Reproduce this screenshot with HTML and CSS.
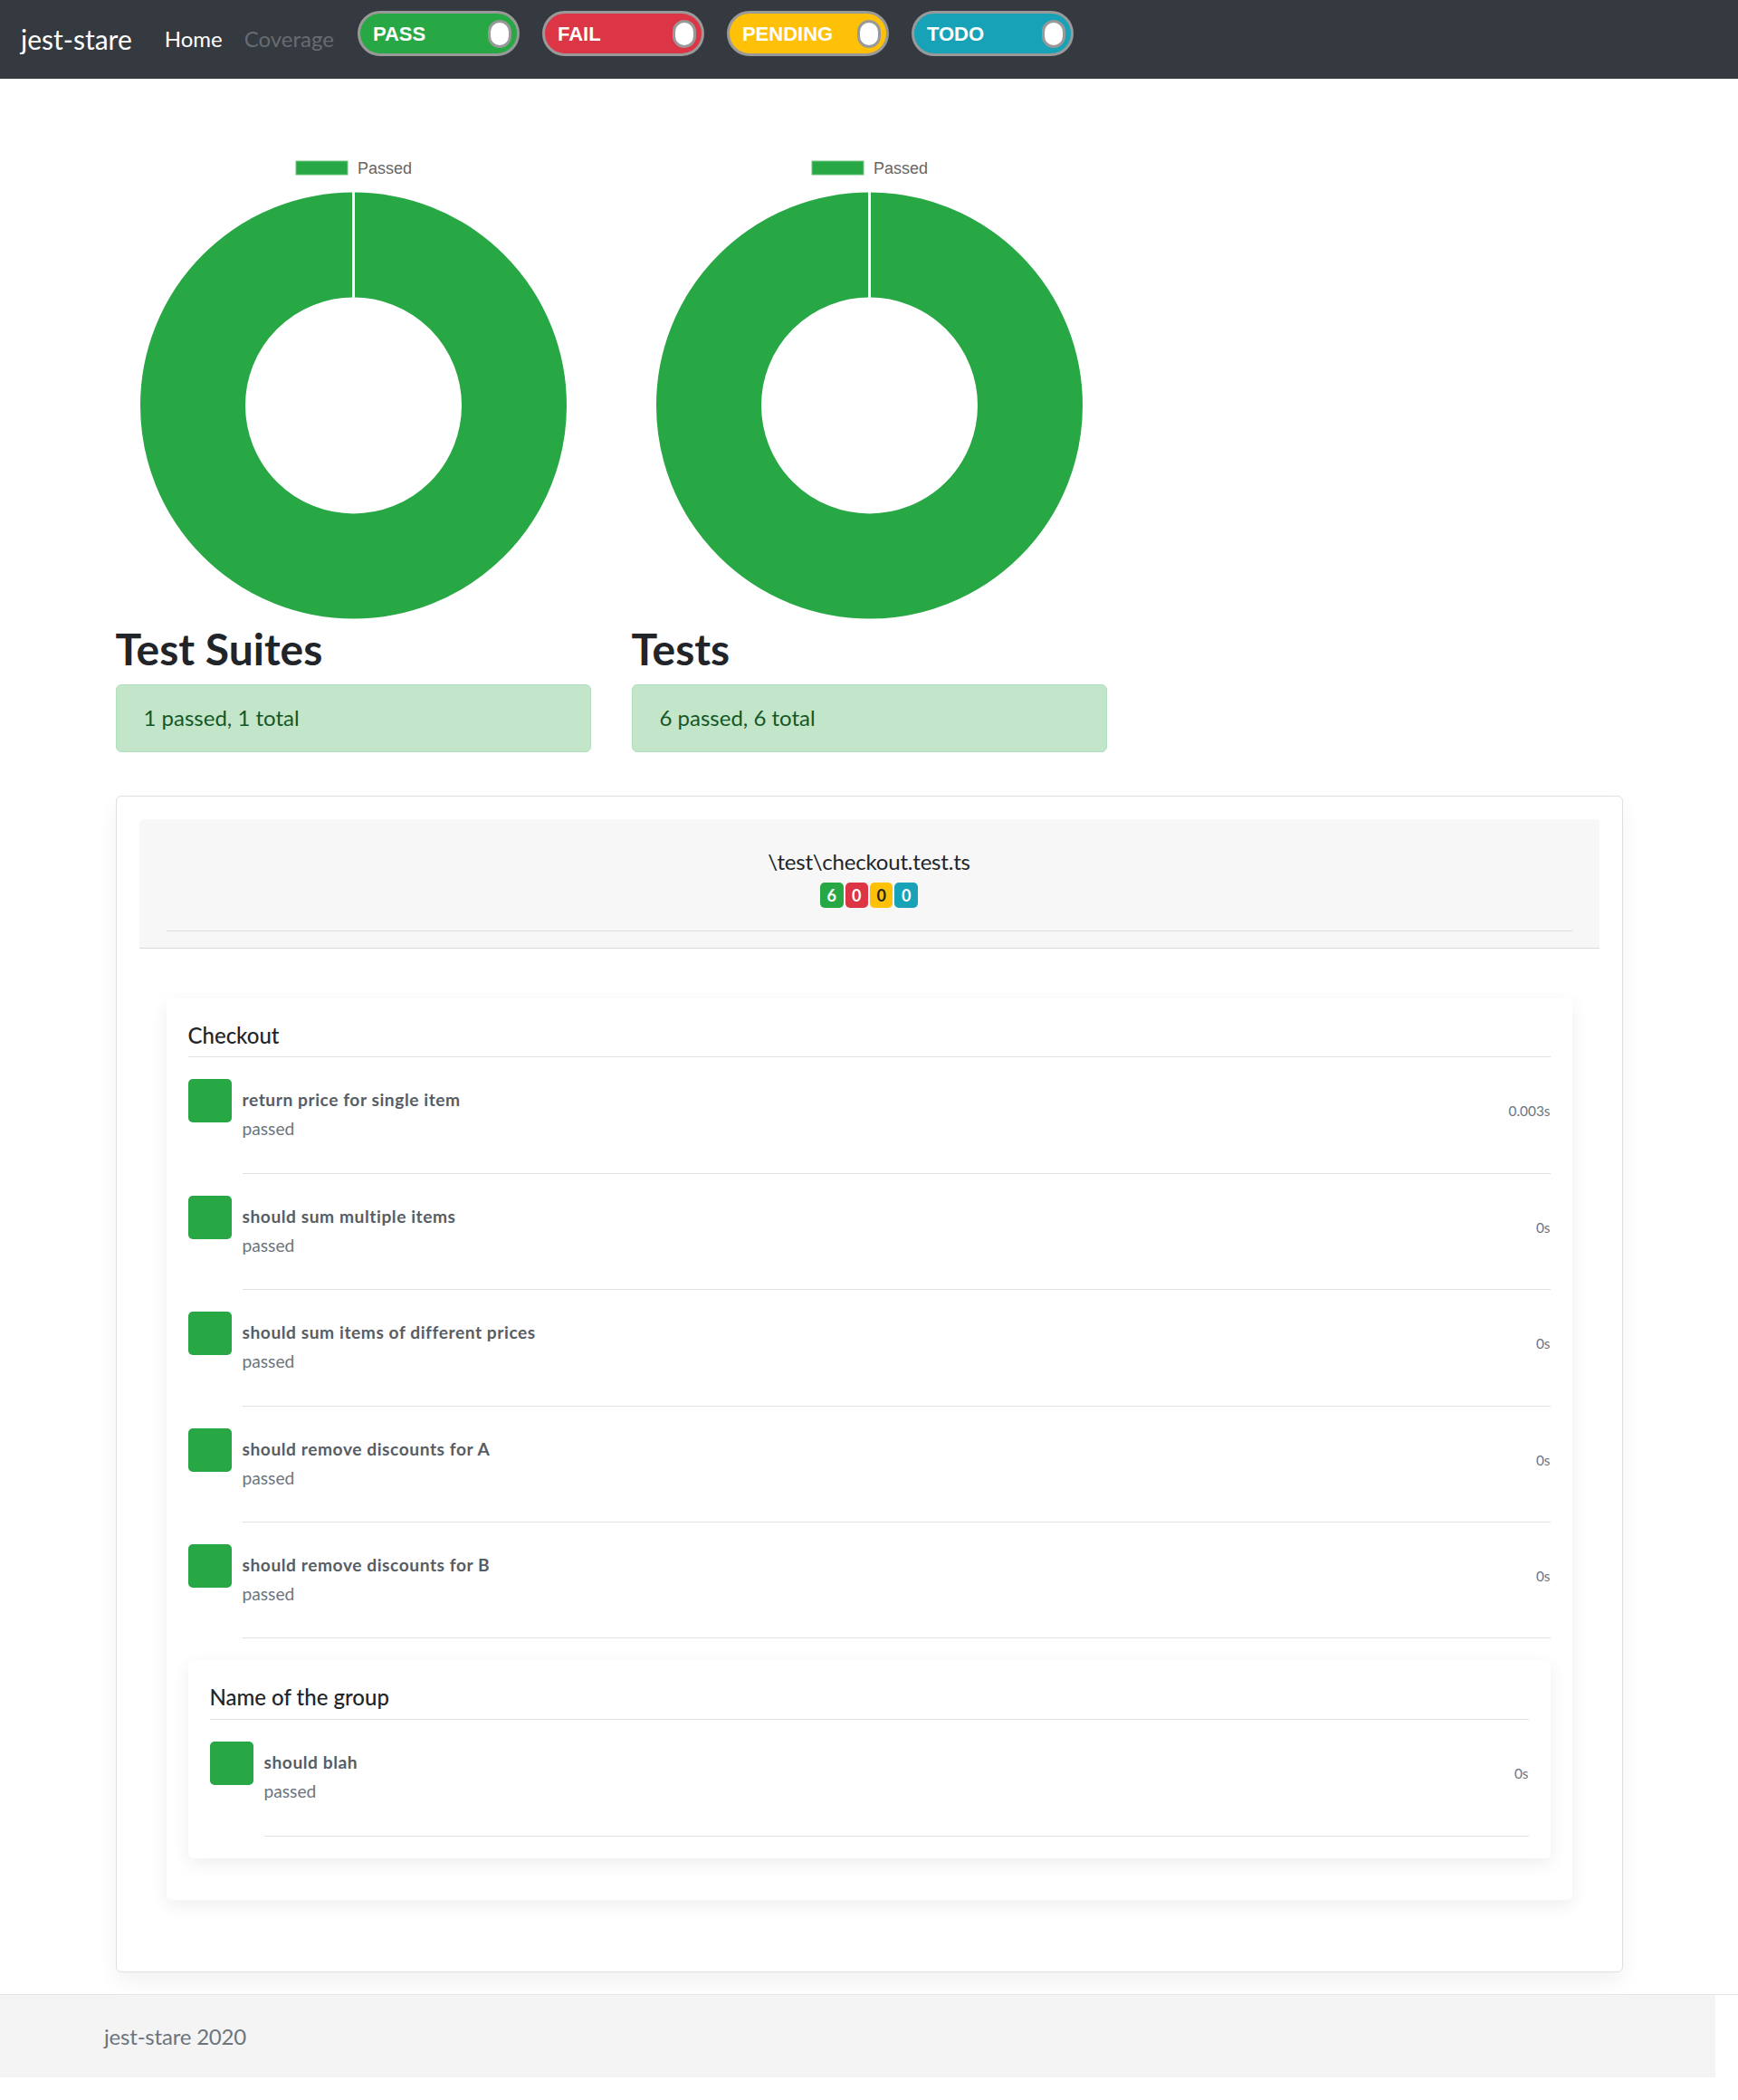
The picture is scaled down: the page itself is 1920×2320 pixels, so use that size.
FILE: index.html
```html
<!DOCTYPE html>
<html lang="en">
<head>
<meta charset="utf-8">
<title>jest-stare</title>
<link rel="stylesheet" href="styles.css">
</head>
<body>
<nav class="navbar">
  <span class="brand">jest-stare</span>
  <span class="nav-link">Home</span>
  <span class="nav-link disabled">Coverage</span>
  <div class="toggles">
    <div class="toggle pass"><span class="toggle-label">PASS</span><span class="knob"></span></div>
    <div class="toggle fail"><span class="toggle-label">FAIL</span><span class="knob"></span></div>
    <div class="toggle pending"><span class="toggle-label">PENDING</span><span class="knob"></span></div>
    <div class="toggle todo"><span class="toggle-label">TODO</span><span class="knob"></span></div>
  </div>
</nav>

<main class="container">
  <div class="summary">
    <section class="summary-col">
      <svg class="chart" viewBox="0 0 525 536" width="525" height="536">
        <rect class="legend-box" x="199" y="28" width="57" height="15"/>
        <text class="legend-text" x="267" y="41.5">Passed</text>
        <circle class="donut" cx="262.5" cy="298" r="177.5"/>
        <line class="donut-gap" x1="262.5" y1="62" x2="262.5" y2="179"/>
      </svg>
      <h2>Test Suites</h2>
      <div class="alert">1 passed, 1 total</div>
    </section>
    <section class="summary-col">
      <svg class="chart" viewBox="0 0 525 536" width="525" height="536">
        <rect class="legend-box" x="199" y="28" width="57" height="15"/>
        <text class="legend-text" x="267" y="41.5">Passed</text>
        <circle class="donut" cx="262.5" cy="298" r="177.5"/>
        <line class="donut-gap" x1="262.5" y1="62" x2="262.5" y2="179"/>
      </svg>
      <h2>Tests</h2>
      <div class="alert">6 passed, 6 total</div>
    </section>
  </div>

  <div class="card">
    <div class="suite-header">
      <div class="suite-title">\test\checkout.test.ts</div>
      <div class="badges">
        <span class="badge b-pass">6</span><span class="badge b-fail">0</span><span class="badge b-pending">0</span><span class="badge b-todo">0</span>
      </div>
      <div class="rule"></div>
    </div>
    <div class="suite-body">
      <div class="group">
        <h6 class="group-title">Checkout</h6>
        <div class="test">
          <span class="square"></span>
          <div class="test-body">
            <div class="test-text"><strong class="test-name">return price for single item</strong><span class="status">passed</span></div>
            <small class="duration">0.003s</small>
          </div>
        </div>
        <div class="test">
          <span class="square"></span>
          <div class="test-body">
            <div class="test-text"><strong class="test-name">should sum multiple items</strong><span class="status">passed</span></div>
            <small class="duration">0s</small>
          </div>
        </div>
        <div class="test">
          <span class="square"></span>
          <div class="test-body">
            <div class="test-text"><strong class="test-name">should sum items of different prices</strong><span class="status">passed</span></div>
            <small class="duration">0s</small>
          </div>
        </div>
        <div class="test">
          <span class="square"></span>
          <div class="test-body">
            <div class="test-text"><strong class="test-name">should remove discounts for A</strong><span class="status">passed</span></div>
            <small class="duration">0s</small>
          </div>
        </div>
        <div class="test">
          <span class="square"></span>
          <div class="test-body">
            <div class="test-text"><strong class="test-name">should remove discounts for B</strong><span class="status">passed</span></div>
            <small class="duration">0s</small>
          </div>
        </div>
        <div class="group nested">
          <h6 class="group-title">Name of the group</h6>
          <div class="test">
            <span class="square"></span>
            <div class="test-body">
              <div class="test-text"><strong class="test-name">should blah</strong><span class="status">passed</span></div>
              <small class="duration">0s</small>
            </div>
          </div>
        </div>
      </div>
    </div>
  </div>
</main>

<div class="footer-wrap">
  <footer class="footer">
    <div class="footer-inner">jest-stare 2020</div>
  </footer>
</div>
</body>
</html>
```

FILE: styles.css
```css
* { box-sizing: border-box; }

body {
  margin: 0;
  font-family: Lato, "Open Sans", sans-serif;
  font-size: 24px;
  line-height: 1.5;
  color: #212529;
  background: #fff;
}

/* navbar */
.navbar {
  height: 87px;
  background: #343a40;
  display: flex;
  align-items: flex-start;
  padding-left: 23px;
}
.brand {
  font-size: 30px;
  line-height: 45px;
  color: #fff;
  margin-top: 21px;
  margin-right: 24px;
}
.nav-link {
  font-size: 24px;
  line-height: 36px;
  margin-top: 25px;
  padding: 0 12px;
  color: #fff;
}
.nav-link.disabled { color: rgba(255, 255, 255, 0.27); }

.toggles {
  display: flex;
  gap: 25px;
  margin-left: 14px;
  margin-top: 12px;
}
.toggle {
  width: 179px;
  height: 50px;
  border: 3px solid #999;
  border-radius: 25px;
  display: flex;
  align-items: center;
  justify-content: space-between;
  padding: 1px 6px 0 14px;
}
.toggle.pass { background: #28a745; }
.toggle.fail { background: #dc3545; }
.toggle.pending { background: #ffc107; }
.toggle.todo { background: #17a2b8; }
.toggle-label {
  font-family: "Liberation Sans", Arial, sans-serif;
  font-weight: 700;
  font-size: 22px;
  line-height: 22px;
  color: #fff;
}
.knob {
  width: 26px;
  height: 31px;
  border: 3px solid #999;
  border-radius: 13px;
  background: #fff;
}

/* main */
.container {
  width: 1710px;
  margin: 0 auto;
  padding: 63px 22.5px 0;
}
.summary {
  display: grid;
  grid-template-columns: repeat(3, 1fr);
  column-gap: 45px;
}
.chart { display: block; width: 525px; height: 536px; }
.legend-box { fill: #28a745; stroke: #6fc47f; stroke-width: 1; }
.legend-text {
  font-family: "Liberation Sans", Arial, sans-serif;
  font-size: 18px;
  fill: #666;
}
.donut { fill: none; stroke: #28a745; stroke-width: 116; }
.donut-gap { stroke: #fff; stroke-width: 3; }

.summary h2 {
  font-size: 48px;
  font-weight: 700;
  line-height: 57.6px;
  margin: 0 0 10px;
  padding-top: 2px;
}
.alert {
  background: #c3e6cb;
  border: 1px solid #b1dfbb;
  color: #155724;
  border-radius: 6px;
  padding: 18.5px 30px;
  line-height: 36px;
}

.card {
  margin-top: 48px;
  margin-bottom: 24px;
  border: 1px solid #dfdfdf;
  border-radius: 6px;
  padding: 25px 25px 24px;
  box-shadow: 0 12px 24px rgba(0, 0, 0, 0.05);
}
.suite-header {
  background: #f7f7f7;
  border-bottom: 1px solid #d9d9d9;
  border-radius: 5px 5px 0 0;
  padding: 29px 30px 18px;
  text-align: center;
}
.suite-title { line-height: 36px; letter-spacing: -0.2px; }
.badges {
  display: flex;
  justify-content: center;
  gap: 2px;
  margin-top: 5px;
}
.badge {
  font-weight: 700;
  font-size: 18px;
  line-height: 18px;
  padding: 5px 7.5px;
  border-radius: 5px;
  color: #fff;
}
.b-pass { background: #28a745; }
.b-fail { background: #dc3545; }
.b-pending { background: #ffc107; color: #212529; }
.b-todo { background: #17a2b8; }
.rule { height: 1px; background: #dcdcdc; margin-top: 25px; }

.suite-body { padding: 55px 30px 55.5px; }

.group {
  background: #fff;
  border-radius: 6px;
  padding: 24px;
  box-shadow: 0 6px 20px rgba(0, 0, 0, 0.07);
}
.group.nested { margin: 24px 0 22px; }
.group-title {
  margin: 0;
  font-size: 24px;
  font-weight: 500;
  line-height: 28.8px;
  padding: 3px 0 9px;
  border-bottom: 1px solid #dee2e6;
}
.test { display: flex; padding-top: 24px; }
.square {
  flex: none;
  width: 48px;
  height: 48px;
  border-radius: 5px;
  background: #28a745;
  margin-right: 12px;
}
.test-body {
  flex: 1;
  display: flex;
  justify-content: space-between;
  align-items: flex-start;
  padding: 7px 0 32.4px;
  border-bottom: 1px solid #dee2e6;
  font-size: 19.2px;
  line-height: 32px;
}
.test-name {
  display: block;
  font-weight: 700;
  color: #575d64;
  letter-spacing: 0.55px;
}
.status { display: block; color: #6c757d; }
.duration {
  font-size: 15.36px;
  line-height: 20px;
  color: #6c757d;
  margin-top: 18px;
}

/* footer */
.footer-wrap { border-top: 1px solid #e6e6e6; }
.footer { width: 1895px; height: 91px; background: #f4f4f4; }
.footer-inner {
  width: 1710px;
  margin: 0 auto;
  padding: 27.5px 22.5px;
  line-height: 36px;
  color: #6c757d;
  letter-spacing: -0.2px;
}
```
